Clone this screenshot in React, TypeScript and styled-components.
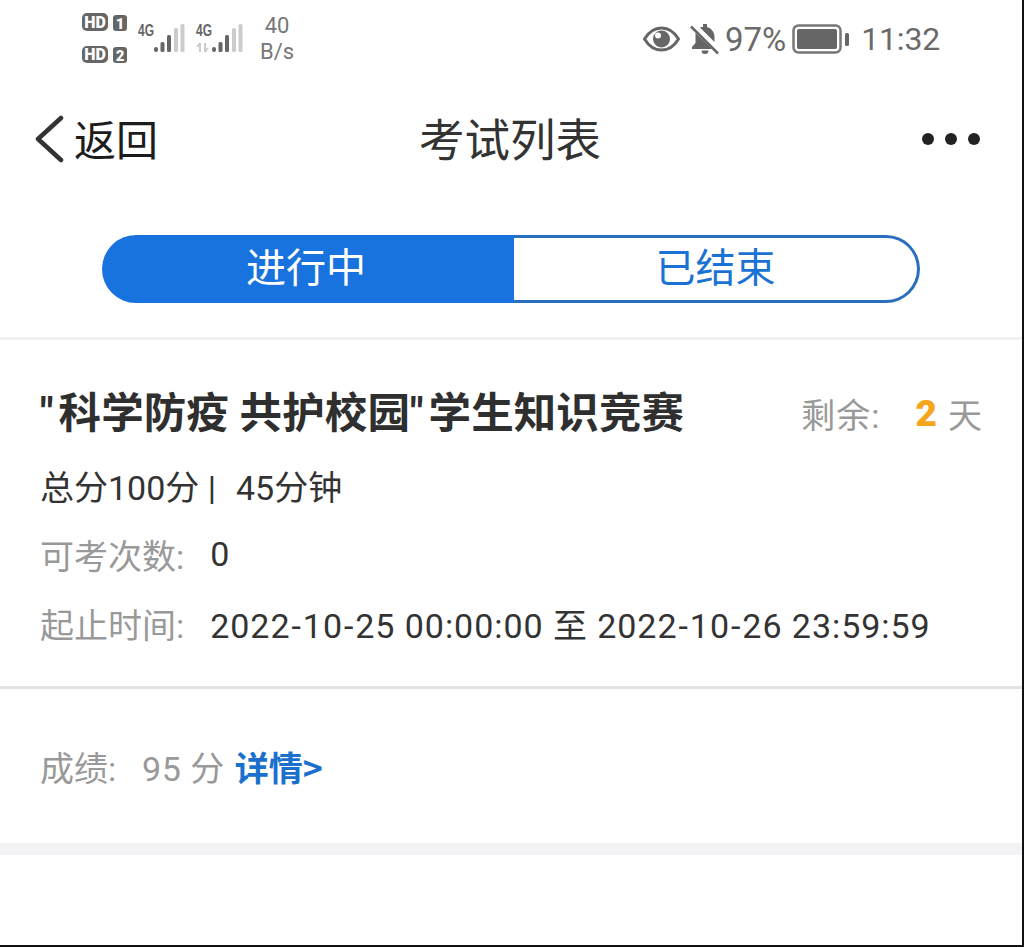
import React from "react";
import styled, { createGlobalStyle } from "styled-components";

const Global = createGlobalStyle`
  html, body { margin: 0; padding: 0; background: #fff; }
  #root { width: 1024px; height: 947px; }
  * { box-sizing: border-box; }
`;

const Screen = styled.div`
  width: 1024px;
  height: 947px;
  background: #fff;
  border-right: 2px solid #111;
  border-bottom: 2px solid #111;
  overflow: hidden;
  font-family: Roboto, "Noto Sans CJK SC", sans-serif;
  display: flex;
  flex-direction: column;
`;

const StatusBar = styled.div`
  height: 80px;
  padding: 13px 82px 0 81px;
  display: flex;
  justify-content: space-between;
  align-items: flex-start;
  color: #666;
`;
const StatusLeft = styled.div`
  display: flex;
  align-items: flex-start;
`;
const HDGap = styled.span`
  width: 6px;
`;
const StatusRight = styled.div`
  display: flex;
  align-items: center;
  height: 52px;
  font-size: 33px;
  color: #6a6a6a;
`;
const NetSpeed = styled.div`
  margin-left: 7px;
  margin-top: 0;
  width: 34px;
  text-align: center;
  font-size: 22px;
  line-height: 26px;
  color: #777;
`;
const Percent = styled.span`
  margin-left: 5px;
`;
const Clock = styled.span`
  margin-left: 11px;
  font-size: 32px;
  letter-spacing: -0.2px;
`;
const Badge = styled.text`
  font-family: Roboto, sans-serif;
  font-weight: 900;
  fill: #fff;
`;
const NetLabel = styled.text`
  font-family: "Liberation Sans", sans-serif;
  font-weight: 700;
  fill: #666;
`;

const Header = styled.div`
  height: 118px;
  padding: 0 42px 0 34px;
  display: grid;
  grid-template-columns: 1fr auto 1fr;
  align-items: center;
`;
const Back = styled.div`
  display: flex;
  align-items: center;
  gap: 9px;
  font-size: 42px;
  color: #1c1c1c;
`;
const BackLabel = styled.span`
  padding-bottom: 4px;
`;
const Title = styled.div`
  font-size: 45.5px;
  color: #333;
  padding: 0 0 4px 6px;
`;
const More = styled.div`
  justify-self: end;
  display: flex;
  gap: 11px;
`;
const Dot = styled.span`
  width: 12px;
  height: 12px;
  border-radius: 50%;
  background: #222;
`;

const TabsWrap = styled.div`
  padding: 37px 102px 34px 102px;
  border-bottom: 3px solid #f2f2f2;
`;
const Tabs = styled.div`
  height: 68px;
  display: flex;
`;
const Tab = styled.div<{ $active?: boolean }>`
  flex: ${(p) => (p.$active ? "0 0 412px" : "1")};
  display: flex;
  align-items: center;
  justify-content: center;
  font-size: 40px;
  padding: ${(p) => (p.$active ? "0 4px 8px 0" : "0 0 8px 0")};
  border-radius: ${(p) => (p.$active ? "34px 0 0 34px" : "0 34px 34px 0")};
  background: ${(p) => (p.$active ? "#1873de" : "#fff")};
  color: ${(p) => (p.$active ? "#fff" : "#1a73d4")};
  border: ${(p) => (p.$active ? "none" : "3px solid #2a6fbd")};
  border-left: none;
`;

const Card = styled.div`
  padding: 0 40px;
  height: 349px;
  border-bottom: 3px solid #e4e4e4;
  display: flex;
  flex-direction: column;
`;
const CardHead = styled.div`
  display: flex;
  justify-content: space-between;
  align-items: center;
  height: 72px;
  margin-top: 37px;
`;
const ExamName = styled.div`
  font-size: 42.5px;
  font-weight: 700;
  letter-spacing: 0.1px;
  color: #2f2f2f;
  white-space: nowrap;
  padding-bottom: 8px;
`;
const Quote = styled.span`
  letter-spacing: 5px;
`;
const Remain = styled.div`
  font-size: 34px;
  color: #999;
  display: flex;
  align-items: center;
  white-space: nowrap;
  letter-spacing: 1px;
  margin-right: -1px;
`;
const Days = styled.span`
  font-weight: 900;
  color: #f5a51b;
  margin: 0 11px 0 35px;
  font-size: 37px;
  letter-spacing: 0;
`;
const Line = styled.div<{ $h: number }>`
  height: ${(p) => p.$h}px;
  display: flex;
  align-items: center;
  font-size: 34px;
  white-space: pre;
  color: #333;
`;
const Muted = styled.span`
  color: #999;
`;
const Value = styled.span`
  margin-left: 26px;
  letter-spacing: 0.95px;
`;
const Hyphen = styled.span`
  margin: 0 1px;
`;
const Duration = styled.span`
  margin-left: 3px;
`;

const ScoreRow = styled.div`
  height: 154px;
  padding: 0 40px;
  display: flex;
  align-items: center;
  font-size: 34px;
  color: #999;
  white-space: pre;
`;
const ScoreValue = styled.span`
  margin-left: 8px;
  letter-spacing: 0.5px;
`;
const Detail = styled.span`
  margin-left: 10px;
  font-family: "Noto Sans CJK SC", sans-serif;
  font-weight: 700;
  color: #1a70cc;
`;
const Band = styled.div`
  height: 12px;
  background: #f3f3f5;
`;

const BellGap = styled.svg`
  margin-left: 10px;
`;
const BatteryIcon = styled.svg`
  margin-left: 6px;
`;

const HDIcons = () => (
  <svg width="50" height="56" viewBox="0 0 50 56">
    <rect x="1" y="0" width="26" height="18" rx="5" fill="#666" />
    <Badge x="14" y="14.500" fontSize="16" textAnchor="middle">HD</Badge>
    <rect x="32" y="2" width="14" height="16" rx="3" fill="#666" />
    <Badge x="39" y="15.500" fontSize="15" textAnchor="middle">1</Badge>
    <rect x="1" y="33" width="26" height="17" rx="5" fill="#666" />
    <Badge x="14" y="47" fontSize="16" textAnchor="middle">HD</Badge>
    <rect x="32" y="34" width="14" height="16" rx="3" fill="#666" />
    <Badge x="39" y="47.500" fontSize="15" textAnchor="middle">2</Badge>
  </svg>
);

const Signal = ({ arrows }: { arrows?: boolean }) => (
  <svg width="58" height="56" viewBox="0 0 58 56">
    <NetLabel x="1" y="23" fontSize="17" textLength="16" lengthAdjust="spacingAndGlyphs">4G</NetLabel>
    {arrows && (
      <path d="M5 39v-9M5 30l-3 4M10 30v9M10 39l3-4" stroke="#ccc" strokeWidth="2" fill="none" />
    )}
    <rect x="17" y="34" width="4" height="5" rx="2" fill="#666" />
    <rect x="23.500" y="29" width="4" height="10" rx="1.500" fill="#666" />
    <rect x="30" y="22" width="4" height="17" rx="1.500" fill="#666" />
    <rect x="37" y="15" width="4" height="24" rx="1.500" fill="#ccc" />
    <rect x="43.500" y="11" width="4" height="28" rx="1.500" fill="#ccc" />
  </svg>
);

const Eye = () => (
  <svg width="37" height="26" viewBox="0 0 37 26">
    <path d="M1.500 13C6 5.500 12 2 18.500 2S31 5.500 35.500 13C31 20.500 25 24 18.500 24S6 20.500 1.500 13Z" fill="none" stroke="#666" strokeWidth="3" />
    <circle cx="18.500" cy="13" r="8.500" fill="#666" />
    <circle cx="15" cy="9.500" r="3" fill="#fff" />
  </svg>
);

const BellOff = () => (
  <BellGap width="30" height="32" viewBox="0 0 30 32">
    <path d="M13 1h4v3c5 1.500 7.500 5.500 7.500 10v5L10 4.500C11 4 12 4 13 4ZM5.500 10 22 26H2v-2l3.500-4Z" fill="#666" />
    <path d="M11.500 27.500h7a3.500 3.500 0 0 1-7 0Z" fill="#666" />
    <path d="M1 3.500 28 30.500" stroke="#666" strokeWidth="2.500" />
  </BellGap>
);

const Battery = () => (
  <BatteryIcon width="58" height="30" viewBox="0 0 58 30">
    <rect x="1.500" y="1.500" width="47" height="27" rx="5" fill="none" stroke="#777" strokeWidth="2.500" />
    <rect x="5" y="5" width="40" height="20" rx="2" fill="#666" />
    <rect x="53" y="9" width="4" height="13" rx="1.500" fill="#666" />
  </BatteryIcon>
);

const Chevron = () => (
  <svg width="31" height="48" viewBox="0 0 31 48">
    <path d="M27 3 4 24l23 21" fill="none" stroke="#333" strokeWidth="4.500" strokeLinecap="round" strokeLinejoin="round" />
  </svg>
);

export default function App() {
  return (
    <Screen>
      <Global />
      <StatusBar>
        <StatusLeft>
          <HDIcons />
          <HDGap />
          <Signal />
          <Signal arrows />
          <NetSpeed>40<br />B/s</NetSpeed>
        </StatusLeft>
        <StatusRight>
          <Eye />
          <BellOff />
          <Percent>97%</Percent>
          <Battery />
          <Clock>11:32</Clock>
        </StatusRight>
      </StatusBar>
      <Header>
        <Back>
          <Chevron />
          <BackLabel>返回</BackLabel>
        </Back>
        <Title>考试列表</Title>
        <More>
          <Dot />
          <Dot />
          <Dot />
        </More>
      </Header>
      <TabsWrap>
        <Tabs>
          <Tab $active>进行中</Tab>
          <Tab>已结束</Tab>
        </Tabs>
      </TabsWrap>
      <Card>
        <CardHead>
          <ExamName>
            <Quote>"</Quote>科学防疫 共护校园<Quote>"</Quote>学生知识竞赛
          </ExamName>
          <Remain>
            剩余:
            <Days>2</Days>
            天
          </Remain>
        </CardHead>
        <Line $h={72}>
          总分100分 |  <Duration>45分钟</Duration>
        </Line>
        <Line $h={66}>
          <Muted>可考次数:</Muted>
          <Value>0</Value>
        </Line>
        <Line $h={72}>
          <Muted>起止时间:</Muted>
          <Value>
            2022<Hyphen>-</Hyphen>10<Hyphen>-</Hyphen>25 00:00:00 至 2022<Hyphen>-</Hyphen>10<Hyphen>-</Hyphen>26 23:59:59
          </Value>
        </Line>
      </Card>
      <ScoreRow>
        成绩:
        <ScoreValue>  95 分</ScoreValue>
        <Detail>详情&gt;</Detail>
      </ScoreRow>
      <Band />
    </Screen>
  );
}
